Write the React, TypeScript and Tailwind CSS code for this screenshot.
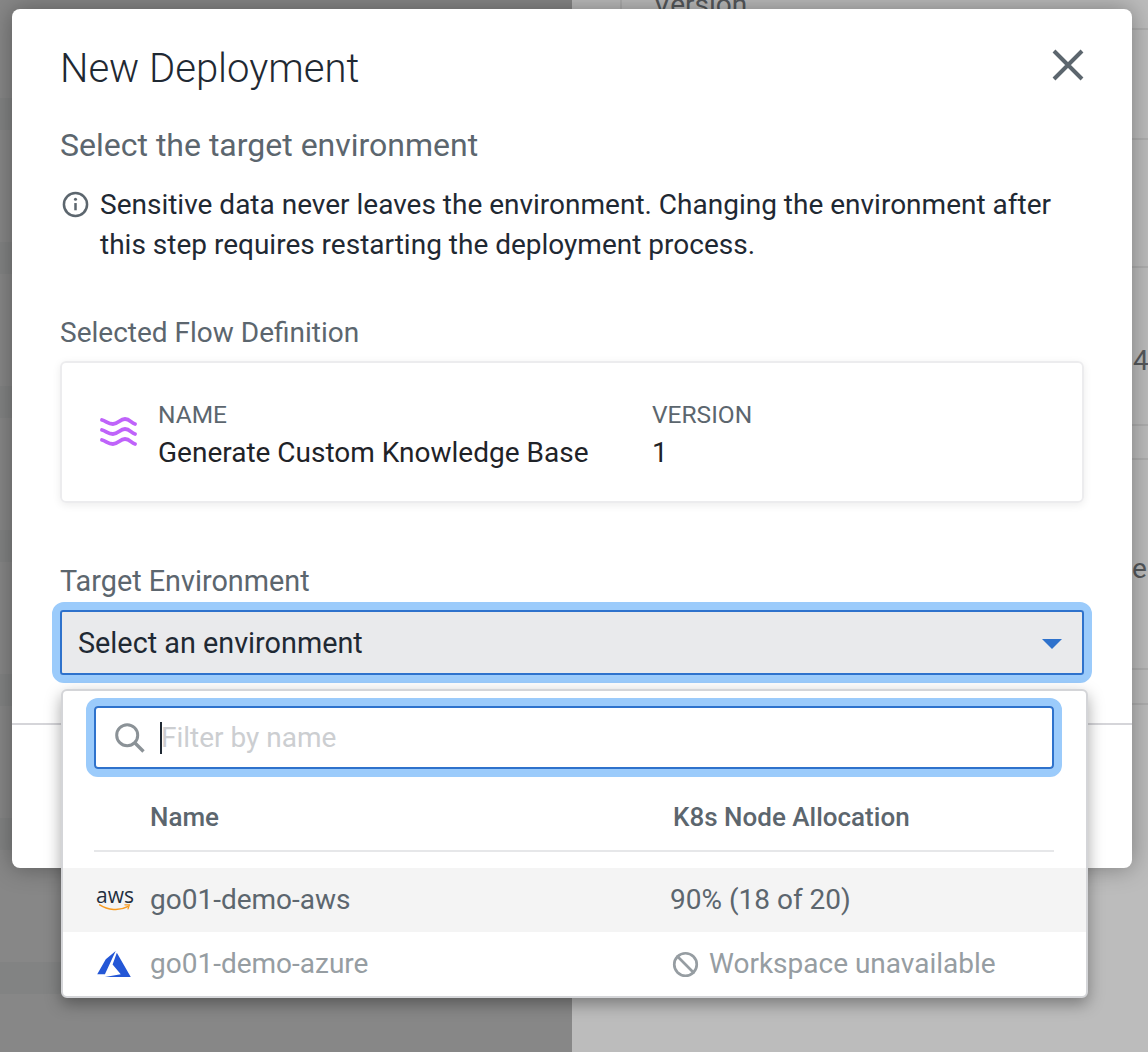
import { Ban } from "lucide-react";

const leftBands = [0, 1, 2, 3, 4, 5, 6];

function InfoIcon() {
  return (
    <svg viewBox="0 0 28 28" className="h-[27px] w-[27px] shrink-0 text-[#5c666e]" fill="none" stroke="currentColor">
      <circle cx="14" cy="14" r="12" strokeWidth="2.6" />
      <path d="M14 12.5v7.5" strokeWidth="2.6" />
      <circle cx="14" cy="8.6" r="1.6" fill="currentColor" stroke="none" />
    </svg>
  );
}

function CloseIcon() {
  return (
    <svg viewBox="0 0 32 32" className="h-8 w-8 text-[#5c666e]" fill="none" stroke="currentColor" strokeWidth="4">
      <path d="M2 2l28 28M30 2L2 30" />
    </svg>
  );
}

function SearchIcon() {
  return (
    <svg viewBox="0 0 30 30" className="h-[30px] w-[30px] shrink-0 text-[#8b9297]" fill="none" stroke="currentColor">
      <circle cx="12.2" cy="12.2" r="10.5" strokeWidth="3" />
      <path d="M20 20l8.5 8.5" strokeWidth="3.4" />
    </svg>
  );
}

function FlowIcon() {
  return (
    <svg viewBox="0 0 38 32" className="-mt-[8px] h-8 w-[38px] shrink-0 text-[#bf63fa]" fill="none" stroke="currentColor" strokeWidth="3.8" strokeLinecap="round">
      <path d="M2 3c4 1 6 4 11 4s7-5 12-5 6 4 10 5" />
      <path d="M2 13c4 1 6 4 11 4s7-5 12-5 6 4 10 5" />
      <path d="M2 23c4 1 6 4 11 4s7-5 12-5 6 4 10 5" />
    </svg>
  );
}

function AwsLogo() {
  return (
    <div className="flex w-[36px] shrink-0 flex-col items-center">
      <span className="text-[21px] leading-[15px] font-medium text-[#232f3e] font-['Open_Sans',sans-serif]">aws</span>
      <svg viewBox="0 0 36 10" className="h-[9px] w-[36px]" fill="none" stroke="#f79a1f" strokeWidth="1.7" strokeLinecap="round">
        <path d="M1 2c9 6 22 7 31 2" />
        <path d="M29 2l5 0-1.5 4.5" strokeWidth="1.4" />
      </svg>
    </div>
  );
}

function AzureLogo() {
  return (
    <svg viewBox="0 2.7 24 18.6" className="h-[26px] w-[34px] shrink-0" fill="#2457d6">
      <path d="M5.483 21.3H24L14.025 4.013l-3.038 8.347 5.836 6.938L5.483 21.3zM13.23 2.7L6.105 8.677 0 19.253h5.505v.014L13.23 2.7z" />
    </svg>
  );
}

function EnvironmentDropdown() {
  return (
    <div className="absolute top-[680px] left-[49px] w-[1027px] rounded-md border-2 border-[#d4d5d8] bg-white shadow-[0_6px_16px_rgba(0,0,0,0.35)]">
      <div className="pt-[7px] pr-[24px] pl-[23px]">
        <div className="flex h-[79px] items-center rounded-xl border-[8px] border-[#9bcbfb]">
          <div className="flex h-full w-full items-center rounded-[4px] border-2 border-[#2e72cc] pl-[19px]">
            <SearchIcon />
            <span className="ml-[15px] h-8 w-[2px] bg-[#1f2933]" />
            <span className="-ml-[1px] text-[28px] text-[#ccced1]">Filter by name</span>
          </div>
        </div>
      </div>
      <div className="mr-[32px] ml-[31px] flex h-[75px] items-center border-b-2 border-[#e6e7e9] pt-[8px] text-[26px] font-medium text-[#5c666e]">
        <span className="ml-[56px] w-[523px]">Name</span>
        <span>K8s Node Allocation</span>
      </div>
      <div className="mt-4 flex h-16 items-center bg-[#f4f4f4] pl-[34px] text-[28px] text-[#5c666e]">
        <AwsLogo />
        <span className="ml-[17px] w-[520px]">go01-demo-aws</span>
        <span>90% (18 of 20)</span>
      </div>
      <div className="flex h-16 items-center pl-[34px] text-[28px] text-[#969da2]">
        <AzureLogo />
        <span className="ml-[19px] w-[520px]">go01-demo-azure</span>
        <Ban className="mr-[10px] ml-[2px] h-[27px] w-[27px]" strokeWidth={2.4} />
        <span>Workspace unavailable</span>
      </div>
    </div>
  );
}

export default function App() {
  return (
    <div className="relative flex h-[1052px] w-[1148px] overflow-hidden font-['Roboto',sans-serif]">
      <div className="flex w-[572px] flex-col gap-28 bg-[#878787] pt-[98px]">
        {leftBands.map((band) => (
          <div key={band} className="h-8 shrink-0 bg-[#828383]" />
        ))}
      </div>

      <div className="w-[576px] bg-[#bcbcbc] text-[28px] text-[#55585b]">
        <div className="h-[30px] border-b-2 border-[#aeaeae]">
          <div className="ml-[48px] h-[30px] border-l-2 border-[#aeaeae] pl-[31px] leading-[10px]">Version</div>
        </div>
        <div className="h-[110px] border-b-2 border-[#aeaeae]" />
        <div className="h-[128px] border-b-2 border-[#aeaeae]" />
        <div className="h-[158px] border-b-2 border-[#aeaeae] pt-[77px] pl-[561px] leading-8">4</div>
        <div className="h-[34px] border-b-2 border-[#aeaeae]" />
        <div className="h-[210px] border-b-2 border-[#aeaeae] pt-[93px] pl-[560px] leading-8">er</div>
        <div className="h-[35px] border-b-2 border-[#aeaeae]" />
      </div>

      <div className="absolute top-[9px] left-[12px] h-[859px] w-[1120px] rounded-lg bg-white shadow-[0_0_24px_rgba(0,0,0,0.35)]">
        <div className="px-[48px] pt-[33px]">
          <div className="flex items-start justify-between">
            <h1 className="text-[40px] leading-[54px] font-light text-[#1f2933]">New Deployment</h1>
            <button className="mt-[7px] text-[#5c666e]">
              <CloseIcon />
            </button>
          </div>
          <h2 className="mt-[27px] text-[32px] leading-[44px] text-[#5c666e]">Select the target environment</h2>
          <div className="mt-[18px] flex items-start gap-[11px] text-[28px] leading-[40px] text-[#1f2933]">
            <div className="mt-[6px] ml-[2px]"><InfoIcon /></div>
            <p className="w-[960px]">
              Sensitive data never leaves the environment. Changing the environment after this step requires restarting the deployment process.
            </p>
          </div>

          <div className="mt-[48px] text-[28px] leading-[40px] text-[#5c666e]">Selected Flow Definition</div>
          <div className="mt-[8px] flex h-[142px] w-[1024px] items-center rounded-md border-2 border-[#ececee] pt-[10px] pl-[38px] shadow-[0_2px_8px_rgba(0,0,0,0.08)]">
            <FlowIcon />
            <div className="ml-[20px] w-[494px]">
              <div className="text-[24.5px] leading-[32px] text-[#5c666e]">NAME</div>
              <div className="text-[28px] leading-[44px] text-[#1f2328]">Generate Custom Knowledge Base</div>
            </div>
            <div>
              <div className="text-[24.5px] leading-[32px] text-[#5c666e]">VERSION</div>
              <div className="text-[28px] leading-[44px] text-[#1f2328]">1</div>
            </div>
          </div>

          <div className="mt-[58px] text-[28.8px] leading-[40px] text-[#5c666e]">Target Environment</div>
          <div className="mt-[1px] ml-[-8px] w-[1040px] rounded-xl border-[8px] border-[#9bcbfb]">
            <div className="flex h-[65px] items-center justify-between rounded-[3px] border-2 border-[#2e72cc] bg-[#e9eaec] pr-[20px] pl-[16px]">
              <span className="pt-[3px] text-[28.8px] text-[#1f2933]">Select an environment</span>
              <span className="mt-[3px] h-0 w-0 border-x-[10px] border-t-[10px] border-x-transparent border-t-[#2e72cc]" />
            </div>
          </div>
        </div>
        <div className="mt-[40px] border-t-2 border-[#d5d5d9]" />
      </div>

      <div className="absolute top-[9px] left-[12px]">
        <EnvironmentDropdown />
      </div>
    </div>
  );
}
